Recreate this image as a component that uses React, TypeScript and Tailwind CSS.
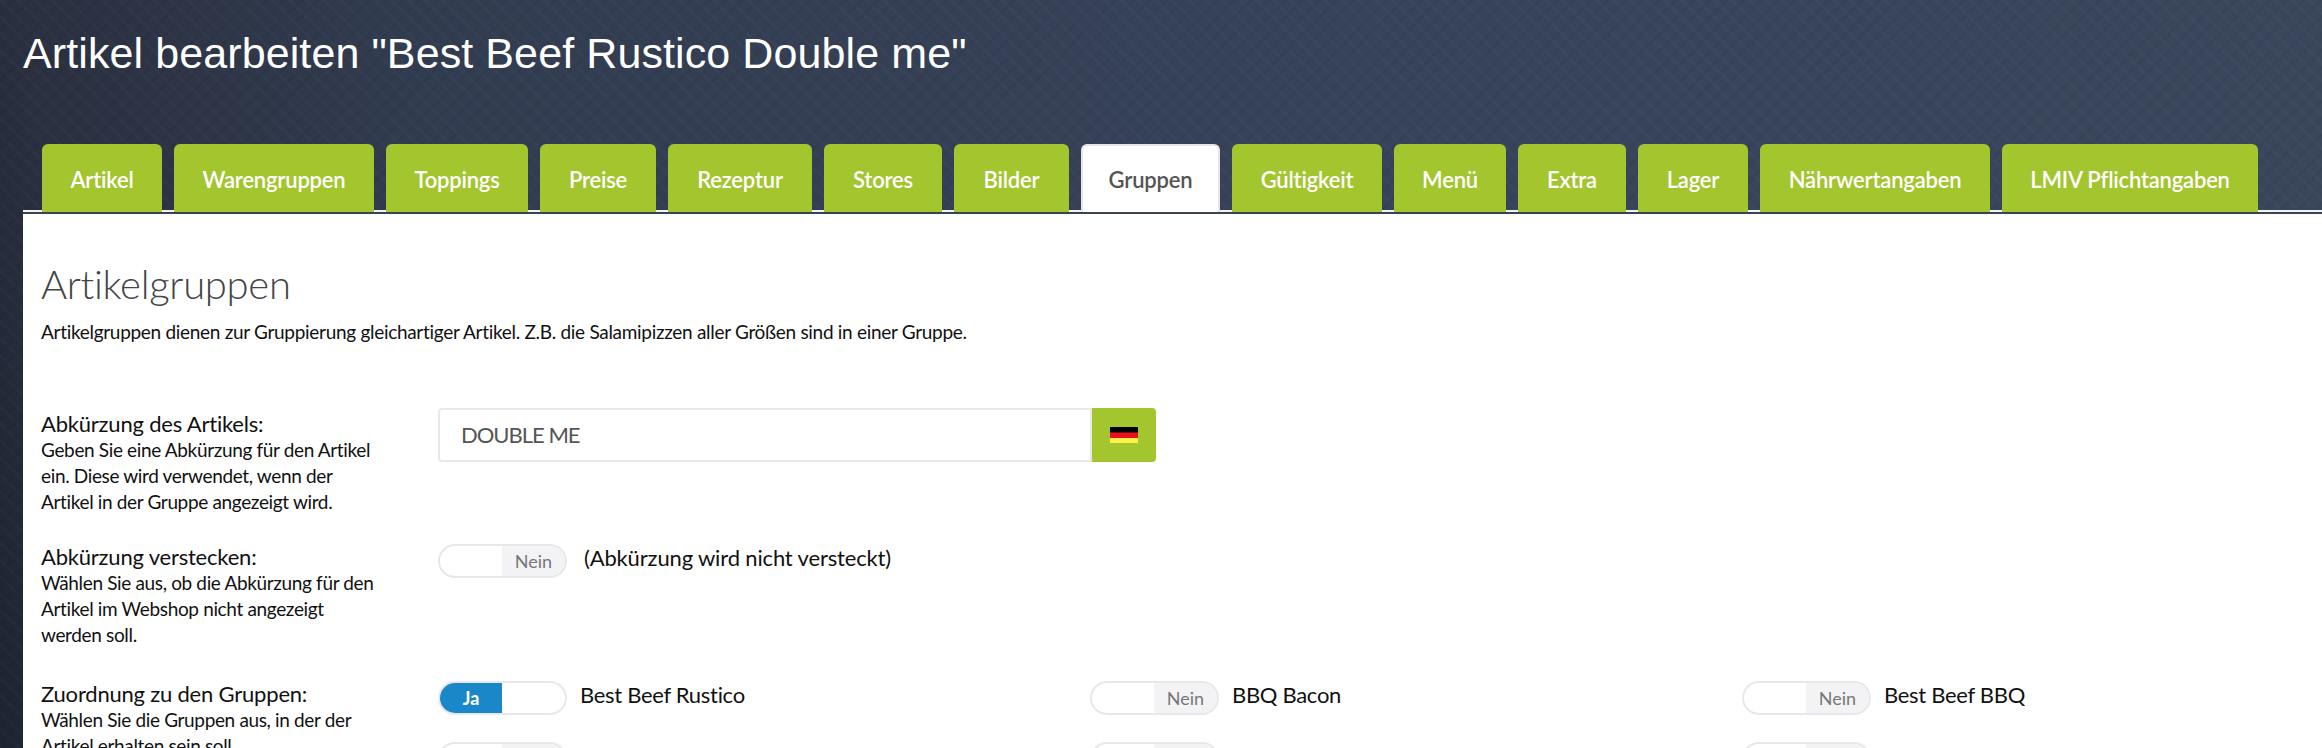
const tabs: [string, number, boolean?][] = [
  ["Artikel", 120],
  ["Warengruppen", 200],
  ["Toppings", 142],
  ["Preise", 116],
  ["Rezeptur", 144],
  ["Stores", 118],
  ["Bilder", 115],
  ["Gruppen", 139, true],
  ["Gültigkeit", 150],
  ["Menü", 112],
  ["Extra", 108],
  ["Lager", 110],
  ["Nährwertangaben", 230],
  ["LMIV Pflichtangaben", 256],
];

function Toggle({ on = false }: { on?: boolean }) {
  return (
    <div className="flex h-[34px] w-[129px] shrink-0 overflow-hidden rounded-full border-2 border-[#e8e8e8] bg-white text-[18px] leading-[30px]">
      {on ? (
        <>
          <div className="w-[62px] bg-[#1a87c9] text-center font-bold text-white">Ja</div>
          <div className="flex-1" />
        </>
      ) : (
        <>
          <div className="w-[62px]" />
          <div className="flex-1 bg-[#f3f3f5] text-center text-[#777]">Nein</div>
        </>
      )}
    </div>
  );
}

function Label({ title, lines, top = false }: { title: string; lines: string; top?: boolean }) {
  return (
    <div className={top ? "w-[397px] shrink-0 pt-[3px] pr-[56px]" : "w-[397px] shrink-0 pr-[56px]"}>
      <div className="text-[22px] leading-[26px] tracking-[-0.2px] text-[#111]">{title}</div>
      <div className="text-[19px] leading-[26px] tracking-[-0.35px] text-[#111]">{lines}</div>
    </div>
  );
}

const groups: [string, boolean][] = [
  ["Best Beef Rustico", true],
  ["BBQ Bacon", false],
  ["Best Beef BBQ", false],
  ["Rustico", false],
  ["Burger", false],
  ["Chicken", false],
];

export default function App() {
  return (
    <div className="flex h-[748px] w-[2322px] flex-col overflow-hidden bg-[repeating-linear-gradient(45deg,rgba(255,255,255,0.014)_0px,rgba(255,255,255,0.014)_3px,transparent_3px,transparent_12px),repeating-linear-gradient(-45deg,rgba(0,0,0,0.04)_0px,rgba(0,0,0,0.04)_3px,transparent_3px,transparent_12px),linear-gradient(80deg,#1d2431_0%,#2a3040_6%,#323c50_22%,#37435a_60%,#3a465c_100%)] font-['Lato','Noto_Sans',sans-serif]">
      <h1 className="h-[144px] shrink-0 pl-[23px] pt-[26px] font-['Liberation_Sans',sans-serif] text-[43px] leading-[54px] font-normal tracking-[0.1px] text-white">
        Artikel bearbeiten "Best Beef Rustico Double me"
      </h1>
      <nav className="ml-[23px] flex h-[68px] shrink-0 border-b-2 border-[#f2f3f5] pl-[19px]">
        <div className="flex h-[68px] gap-3">
          {tabs.map(([name, w, active]) => (
            <div
              key={name}
              style={{ width: w }}
              className={
                active
                  ? "rounded-t-[6px] border-x-2 border-t-2 border-[#e4e6ea] bg-white pt-[20px] text-center text-[22px] leading-[28px] font-semibold tracking-[-0.2px] text-[#555]"
                  : "rounded-t-[6px] bg-[#a3c52e] pt-[22px] text-center text-[22px] leading-[28px] font-semibold tracking-[-0.2px] text-white"
              }
            >
              {name}
            </div>
          ))}
        </div>
      </nav>
      <main className="ml-[23px] flex-1 border-t-2 border-[#3a4350] bg-white pl-[18px]">
        <h2 className="pt-[47px] text-[40px] leading-[46px] font-light tracking-[-0.3px] text-[#444]">Artikelgruppen</h2>
        <p className="mt-[12px] text-[19px] leading-[26px] tracking-[-0.3px] text-[#111]">
          Artikelgruppen dienen zur Gruppierung gleichartiger Artikel. Z.B. die Salamipizzen aller Größen sind in einer Gruppe.
        </p>
        <section className="mt-[63px] flex h-[136px]">
          <Label
            top
            title="Abkürzung des Artikels:"
            lines="Geben Sie eine Abkürzung für den Artikel ein. Diese wird verwendet, wenn der Artikel in der Gruppe angezeigt wird."
          />
          <div className="flex h-[54px]">
            <div className="w-[654px] rounded-l-[4px] border-2 border-[#e8e8e8] pl-[21px] text-[22px] leading-[50px] tracking-[-1px] text-[#555]">
              DOUBLE ME
            </div>
            <div className="flex w-[64px] items-center justify-center rounded-r-[4px] bg-[#a3c52e]">
              <svg width="28" height="16" viewBox="0 0 28 16">
                <rect width="28" height="6" fill="#000" />
                <rect y="5.5" width="28" height="5.5" fill="#e8101a" />
                <rect y="11" width="28" height="5" fill="#fff04a" />
              </svg>
            </div>
          </div>
        </section>
        <section className="flex h-[137px]">
          <Label
            title="Abkürzung verstecken:"
            lines="Wählen Sie aus, ob die Abkürzung für den Artikel im Webshop nicht angezeigt werden soll."
          />
          <div className="flex items-start gap-[17px]">
            <Toggle />
            <span className="text-[22px] leading-[28px] tracking-[-0.15px] text-[#111]">(Abkürzung wird nicht versteckt)</span>
          </div>
        </section>
        <section className="flex">
          <Label
            title="Zuordnung zu den Gruppen:"
            lines="Wählen Sie die Gruppen aus, in der der Artikel erhalten sein soll."
          />
          <div className="grid grid-cols-[652px_652px_400px] gap-y-[27px]">
            {groups.map(([name, on]) => (
              <div key={name} className="flex items-start gap-[13px]">
                <Toggle on={on} />
                <span className="text-[22px] leading-[28px] tracking-[-0.3px] text-[#111]">{name}</span>
              </div>
            ))}
          </div>
        </section>
      </main>
    </div>
  );
}
